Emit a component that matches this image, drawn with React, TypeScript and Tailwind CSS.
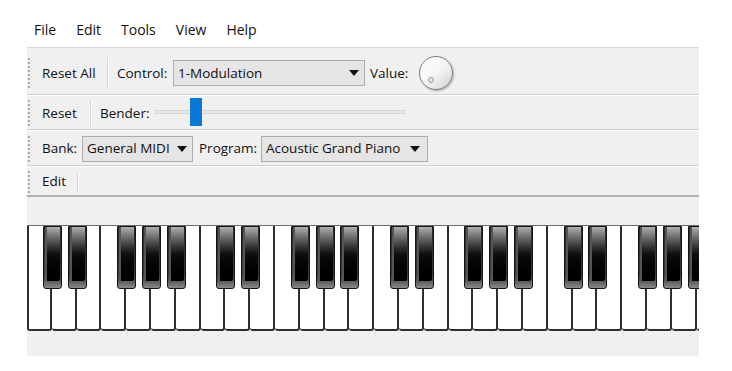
import React from "react";

const KEY_W = 24.8;
const WHITE_COUNT = 28;

function Grip({ h }: { h: string }) {
  return <div className={`shrink-0 w-[2px] ${h} border-l-2 border-dotted border-[#a9a9a9] ml-[1px]`} />;
}

function Sep({ h }: { h: string }) {
  return <div className={`shrink-0 w-[2px] ${h} border-l border-[#d6d6d6] bg-white`} />;
}

function Arrow() {
  return (
    <svg width="10" height="6" viewBox="0 0 10 6" className="shrink-0">
      <path d="M0 0 L10 0 L5 6 Z" fill="#111" />
    </svg>
  );
}

function Label({ text, w, ml }: { text: string; w: string; ml: string }) {
  return <span className={`shrink-0 whitespace-nowrap ${w} ${ml}`}>{text}</span>;
}

function Combo({ text, w, arrowMr }: { text: string; w: string; arrowMr: string }) {
  return (
    <div
      className={`shrink-0 ${w} h-[26px] bg-[#e5e5e5] border border-[#adadad] flex items-center justify-between pl-[4px] ${arrowMr}`}
    >
      <span className="whitespace-nowrap">{text}</span>
      <Arrow />
    </div>
  );
}

function Keyboard() {
  const blacks: number[] = [];
  for (let k = 1; k < WHITE_COUNT; k++) {
    const n = (k - 1) % 7;
    if (n === 0 || n === 1 || n === 3 || n === 4 || n === 5) blacks.push(k);
  }
  return (
    <div className="relative w-[672px] h-[106px] overflow-hidden border-t border-[#6a6a6a]">
      <div className="flex h-full">
        {Array.from({ length: WHITE_COUNT }).map((_, i) => (
          <div
            key={i}
            className={`shrink-0 w-[24.8px] h-[105px] bg-white border-r-2 border-b-2 border-[#2e2e2e] rounded-b-[3px] ${
              i === 0 ? "border-l-2" : ""
            }`}
          />
        ))}
      </div>
      {blacks.map((k) => (
        <div
          key={k}
          className="absolute top-0 w-[19px] h-[63px] rounded-b-[3px] bg-linear-to-b from-[#2a2a2a] via-[#3a3a3a] via-80% to-[#8a8a8a] border border-[#141414] px-[1px] pb-[7px]"
          style={{ left: k * KEY_W - 9 }}
        >
          <div className="w-full h-full rounded-b-[2px] bg-linear-to-b from-[#b0b0b0] via-[#101010] via-50% to-[#000] border-l-[2px] border-[#555]" />
        </div>
      ))}
    </div>
  );
}

export default function App() {
  return (
    <div
      className="w-[732px] h-[371px] bg-white overflow-hidden text-[14px] text-[#111]"
      style={{ fontFamily: '"Open Sans", "Noto Sans", sans-serif' }}
    >
      <div className="ml-[27px] w-[672px]">
        {/* Menu bar */}
        <div className="h-[47px] flex items-start pt-[19px] pl-[7px] gap-[20px] leading-[22px]">
          <span>File</span>
          <span>Edit</span>
          <span>Tools</span>
          <span>View</span>
          <span>Help</span>
        </div>

        <div className="bg-[#f0f0f0] border-t border-[#d9d9d9] text-[13.5px]">
          {/* Row 1 */}
          <div className="h-[47px] flex items-center border-b border-[#cfcfcf] shadow-[0_1px_0_#fff] pt-[4px]">
            <Grip h="h-[30px]" />
            <Label text="Reset All" w="w-[53px]" ml="ml-[12px]" />
            <div className="ml-[12px]">
              <Sep h="h-[32px]" />
            </div>
            <Label text="Control:" w="w-[48px]" ml="ml-[8px]" />
            <div className="ml-[8px]">
              <Combo text="1-Modulation" w="w-[192px]" arrowMr="pr-[5px]" />
            </div>
            <Label text="Value:" w="w-[37px]" ml="ml-[5px]" />
            <div className="shrink-0 ml-[12px] w-[34px] h-[34px] rounded-full border border-[#7f7f7f] bg-linear-to-br from-white via-[#f6f6f6] to-[#cfcfcf] shadow-[1px_1px_2px_rgba(0,0,0,0.3)] relative">
              <div className="absolute left-[8px] top-[20px] w-[6px] h-[6px] rounded-full border border-[#999] bg-[#e8e8e8]" />
            </div>
          </div>

          {/* Row 2 */}
          <div className="h-[35px] flex items-center border-b border-[#cfcfcf] shadow-[0_1px_0_#fff] pt-[2px]">
            <Grip h="h-[26px]" />
            <Label text="Reset" w="w-[36px]" ml="ml-[12px]" />
            <div className="ml-[12px]">
              <Sep h="h-[26px]" />
            </div>
            <Label text="Bender:" w="w-[47px]" ml="ml-[8px]" />
            <div className="shrink-0 ml-[8px] relative w-[250px] h-[28px] flex items-center -mt-[2px]">
              <div className="w-full h-[4px] bg-[#e7e7e7] border border-[#d6d6d6]" />
              <div className="absolute left-[35px] top-0 w-[12px] h-[28px] bg-[#0a78d7]" />
            </div>
          </div>

          {/* Row 3 */}
          <div className="h-[36px] flex items-center border-b border-[#cfcfcf] shadow-[0_1px_0_#fff] pt-[2px]">
            <Grip h="h-[26px]" />
            <Label text="Bank:" w="w-[33px]" ml="ml-[12px]" />
            <div className="ml-[7px]">
              <Combo text="General MIDI" w="w-[111px]" arrowMr="pr-[5px]" />
            </div>
            <Label text="Program:" w="w-[54px]" ml="ml-[6px]" />
            <div className="ml-[8px]">
              <Combo text="Acoustic Grand Piano" w="w-[167px]" arrowMr="pr-[7px]" />
            </div>
          </div>

          {/* Row 4 */}
          <div className="h-[31px] flex items-center border-b-2 border-[#b0b0b0] pt-[2px]">
            <Grip h="h-[22px]" />
            <Label text="Edit" w="w-[24px]" ml="ml-[12px]" />
            <div className="ml-[11px]">
              <Sep h="h-[20px]" />
            </div>
          </div>

          {/* Keyboard area */}
          <div className="pt-[28px] pb-[25px]">
            <Keyboard />
          </div>
        </div>
      </div>
    </div>
  );
}
